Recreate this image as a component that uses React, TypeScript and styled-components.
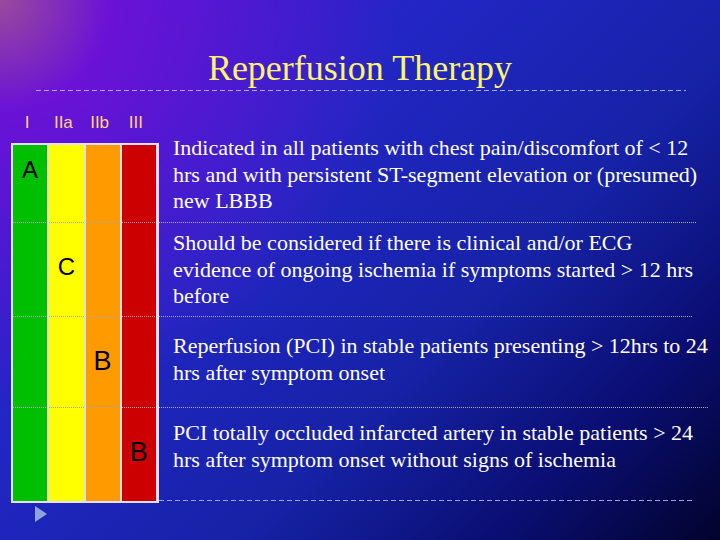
import React from "react";
import styled, { createGlobalStyle } from "styled-components";

const Global = createGlobalStyle`
  html, body { margin: 0; padding: 0; }
  body { width: 720px; height: 540px; overflow: hidden; }
`;

const Slide = styled.div`
  width: 720px;
  height: 540px;
  box-sizing: border-box;
  padding-top: 48px;
  display: flex;
  flex-direction: column;
  background:
    radial-gradient(circle at 0 0, #9a4a9c 0px, #6a12d6 110px, rgba(90, 20, 220, 0) 400px),
    linear-gradient(135deg, #3a1ad6 0%, #2226c4 35%, #1622a6 62%, #0a0e72 82%, #02032c 100%);
`;

const Title = styled.h1`
  margin: 0;
  font-family: "Liberation Serif", "Times New Roman", serif;
  font-weight: normal;
  font-size: 36px;
  line-height: 40px;
  color: #fcf46a;
  text-align: center;
`;

const DashRule = styled.div<{ $from: number; $to: number; $top: number }>`
  margin-left: ${(p) => p.$from}px;
  width: ${(p) => p.$to - p.$from}px;
  margin-top: ${(p) => p.$top}px;
  height: 1px;
  background: repeating-linear-gradient(90deg, #a7a8d8 0 5px, transparent 5px 8px);
`;

const ClassRow = styled.div`
  margin-top: 23px;
  margin-left: 8px;
  width: 143px;
  padding: 0 2px;
  display: grid;
  grid-template-columns: repeat(4, 1fr);
  column-gap: 2px;
`;

const ClassLabel = styled.span`
  font-family: "Liberation Sans", Arial, sans-serif;
  font-size: 17px;
  line-height: 18px;
  color: #ffd27a;
  text-align: center;
`;

const Table = styled.div`
  margin-top: 11px;
  margin-left: 11px;
  width: 667px;
  display: flex;
  flex-direction: column;
`;

const dotted = "linear-gradient(90deg, #a9a9b6 50%, transparent 50%) left bottom / 2px 1px repeat-x";

const Row = styled.div<{ $h: number }>`
  height: ${(p) => p.$h}px;
  display: flex;
  align-items: stretch;
`;

const StripeGroup = styled.div<{ $first?: boolean; $last?: boolean }>`
  flex: 0 0 143px;
  display: grid;
  grid-template-columns: repeat(4, 1fr);
  column-gap: 2px;
  background: #dfe2dc;
  border-left: 2px solid #e4e0f0;
  border-right: 3px solid #e4e0f0;
  border-top: ${(p) => (p.$first ? "2px solid #e4e0f0" : "none")};
  border-bottom: ${(p) => (p.$last ? "2px solid #e4e0f0" : "none")};
`;

const Stripe = styled.div<{ $color: string; $divider?: boolean }>`
  display: flex;
  justify-content: center;
  align-items: flex-start;
  background: ${(p) => (p.$divider ? `${dotted}, ${p.$color}` : p.$color)};
`;

const Grade = styled.span<{ $size: number; $top: number }>`
  margin-top: ${(p) => p.$top}px;
  font-family: "Liberation Sans", Arial, sans-serif;
  font-size: ${(p) => p.$size}px;
  line-height: ${(p) => p.$size}px;
  color: #000;
`;

const TextCell = styled.div<{ $divider?: boolean; $last?: boolean }>`
  flex: 1;
  padding-left: 14px;
  background: ${(p) => (p.$divider ? dotted : "none")};
  display: flex;
  flex-direction: column;
  ${(p) =>
    p.$last
      ? `margin-bottom: 2px; margin-right: -8px; background: repeating-linear-gradient(90deg, #9aa4e4 0 5px, transparent 5px 8px) left bottom / 100% 1px no-repeat;`
      : ""}
`;

const Recommendation = styled.p<{ $top: number }>`
  margin: ${(p) => p.$top}px 0 0 0;
  font-family: "Liberation Serif", "Times New Roman", serif;
  font-size: 22px;
  line-height: 26.5px;
  color: #ffffff;
  white-space: nowrap;
`;

const NavArrow = styled.svg`
  margin-left: 35px;
  margin-top: 3px;
  display: block;
`;

const COLORS = ["#00bf00", "#ffff00", "#ff9a00", "#cc0000"];

type RowData = {
  h: number;
  grade: string;
  col: number;
  size: number;
  gradeTop: number;
  textTop: number;
  lines: string[];
};

const ROWS: RowData[] = [
  {
    h: 80,
    grade: "A",
    col: 0,
    size: 24,
    gradeTop: 13,
    textTop: -8,
    lines: [
      "Indicated in all patients with chest pain/discomfort of < 12",
      "hrs and with persistent ST-segment elevation or (presumed)",
      "new LBBB",
    ],
  },
  {
    h: 94,
    grade: "C",
    col: 1,
    size: 24,
    gradeTop: 32,
    textTop: 7,
    lines: [
      "Should be considered if there is clinical and/or ECG",
      "evidence of ongoing ischemia if symptoms started > 12 hrs",
      "before",
    ],
  },
  {
    h: 91,
    grade: "B",
    col: 2,
    size: 27,
    gradeTop: 31,
    textTop: 16,
    lines: [
      "Reperfusion (PCI) in stable patients presenting > 12hrs to 24",
      "hrs after symptom onset",
    ],
  },
  {
    h: 95,
    grade: "B",
    col: 3,
    size: 27,
    gradeTop: 31,
    textTop: 12,
    lines: [
      "PCI totally occluded infarcted artery in stable patients > 24",
      "hrs after symptom onset without signs of ischemia",
    ],
  },
];

export default function App() {
  return (
    <>
      <Global />
      <Slide>
        <Title>Reperfusion Therapy</Title>
        <DashRule $from={36} $to={686} $top={2} />
        <ClassRow>
          <ClassLabel>I</ClassLabel>
          <ClassLabel>IIa</ClassLabel>
          <ClassLabel>IIb</ClassLabel>
          <ClassLabel>III</ClassLabel>
        </ClassRow>
        <Table>
          {ROWS.map((r, i) => {
            const first = i === 0;
            const last = i === ROWS.length - 1;
            return (
              <Row key={i} $h={r.h}>
                <StripeGroup $first={first} $last={last}>
                  {COLORS.map((c, ci) => (
                    <Stripe key={ci} $color={c} $divider={!last}>
                      {ci === r.col && (
                        <Grade $size={r.size} $top={r.gradeTop}>
                          {r.grade}
                        </Grade>
                      )}
                    </Stripe>
                  ))}
                </StripeGroup>
                <TextCell $divider={!last} $last={last}>
                  <Recommendation $top={r.textTop}>
                    {r.lines.map((l, li) => (
                      <React.Fragment key={li}>
                        {l}
                        {li < r.lines.length - 1 && <br />}
                      </React.Fragment>
                    ))}
                  </Recommendation>
                </TextCell>
              </Row>
            );
          })}
        </Table>
        <NavArrow width="12" height="16" viewBox="0 0 12 16">
          <polygon points="0,0 12,8 0,16" fill="#8ea4da" />
        </NavArrow>
      </Slide>
    </>
  );
}
